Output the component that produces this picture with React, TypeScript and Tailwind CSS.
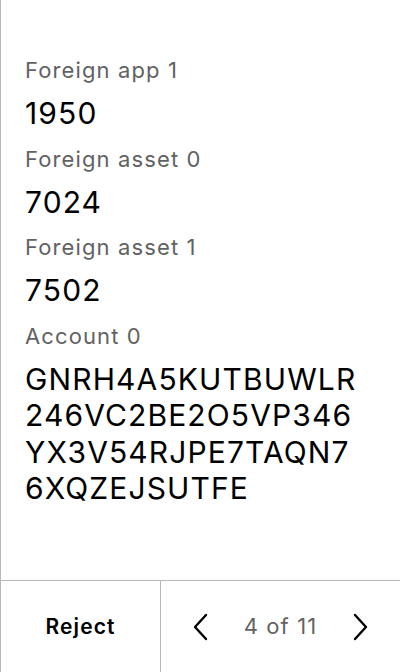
import React from "react";

const fields = [
  { label: "Foreign app 1", value: "1950" },
  { label: "Foreign asset 0", value: "7024" },
  { label: "Foreign asset 1", value: "7502" },
  { label: "Account 0", value: "GNRH4A5KUTBUWLR246VC2BE2O5VP346YX3V54RJPE7TAQN76XQZEJSUTFE" },
];

export default function App() {
  return (
    <div className="h-[672px] w-[400px] flex flex-col bg-white border-l border-[#b8b8b8] font-['Inter',sans-serif] tracking-[0.07em] text-black">
      {/* DETAILS */}
      <div className="flex-1 overflow-hidden pt-[56px] pl-[24px] pr-[38px]">
        {fields.map((f, i) => (
          <div key={i} className="mb-[13px]">
            <p className="text-[22px] leading-[28px] text-[#626262]">{f.label}</p>
            <p className="mt-[11px] text-[30px] leading-[36.5px] break-all">{f.value}</p>
          </div>
        ))}
      </div>

      {/* FOOTER */}
      <div className="h-[92px] flex border-t border-[#b8b8b8]">
        <button className="w-[160px] flex items-center justify-center border-r border-[#b8b8b8] text-[21px] font-semibold">
          Reject
        </button>
        <div className="flex-1 flex items-center justify-between pl-[31px] pr-[31px]">
          <svg width="16" height="28" viewBox="0 0 16 28" fill="none" stroke="black" strokeWidth="2.4" strokeLinecap="round" strokeLinejoin="round">
            <path d="M14 2 L3 14 L14 26" />
          </svg>
          <span className="text-[22px] text-[#626262]">4 of 11</span>
          <svg width="16" height="28" viewBox="0 0 16 28" fill="none" stroke="black" strokeWidth="2.4" strokeLinecap="round" strokeLinejoin="round">
            <path d="M2 2 L13 14 L2 26" />
          </svg>
        </div>
      </div>
    </div>
  );
}
